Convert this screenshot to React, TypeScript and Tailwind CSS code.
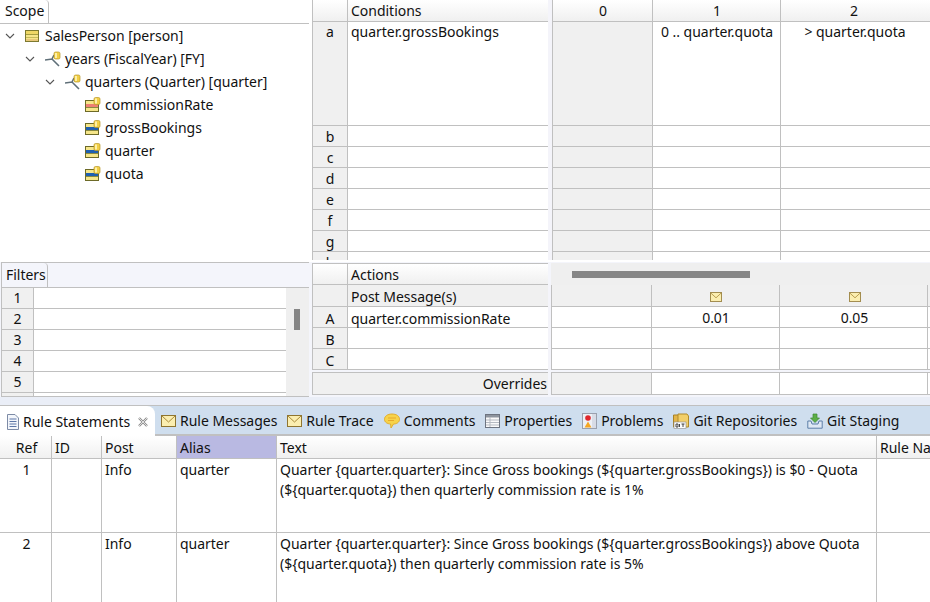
import React from "react";

const FONT = "font-['Noto_Sans','Open_Sans',sans-serif]";
const line = "border-[#c0c0c0]";

function Chevron() {
  return (
    <svg width="10" height="10" viewBox="0 0 10 10" className="shrink-0">
      <path d="M1 3 L5 7 L9 3" fill="none" stroke="#555" strokeWidth="1.1" />
    </svg>
  );
}

function Cyl({ x, y }: { x: number; y: number }) {
  return (
    <g>
      <rect x={x} y={y} width="6" height="7" rx="1.5" fill="#f2cf45" stroke="#b8962a" strokeWidth="0.7" />
      <rect x={x + 1} y={y + 1} width="2" height="5" fill="#fdf0a8" />
    </g>
  );
}

function TableIcon() {
  return (
    <svg width="15" height="14" viewBox="0 0 15 14" className="shrink-0">
      <rect x="0.5" y="1.5" width="13" height="11" fill="#f6e68a" stroke="#7d7a30" />
      <rect x="1" y="2" width="12" height="3" fill="#eed765" />
      <rect x="1" y="5" width="12" height="1" fill="#a49c40" />
      <rect x="1" y="8" width="12" height="1" fill="#c7bb5a" />
      <rect x="1" y="10" width="12" height="2" fill="#e8c87a" />
    </svg>
  );
}

function RelIcon() {
  return (
    <svg width="16" height="16" viewBox="0 0 16 16" className="shrink-0">
      <path d="M0 9 L7 8 L14 15 M7 8 L9 4" fill="none" stroke="#5f6f78" strokeWidth="1.6" />
      <Cyl x={9} y={1} />
    </svg>
  );
}

function AttrIcon({ band }: { band: string }) {
  return (
    <svg width="16" height="15" viewBox="0 0 16 15" className="shrink-0">
      <rect x="0.5" y="3.5" width="13" height="11" fill="#f6e68a" stroke="#6d6a28" />
      <rect x="1" y="7" width="12" height="3" fill={band} />
      <rect x="1" y="10" width="12" height="1" fill="#8a8a40" />
      <Cyl x={9} y={0.5} />
    </svg>
  );
}

function Envelope({ small }: { small?: boolean }) {
  const s = small ? 12 : 15;
  return (
    <svg width={s} height={small ? 10 : 12} viewBox="0 0 15 12" className="shrink-0">
      <rect x="0.5" y="0.5" width="14" height="11" fill="#fbeeb0" stroke="#8f7530" />
      <path d="M1 1 L7.5 7 L14 1" fill="none" stroke="#a98a3a" />
    </svg>
  );
}

function DocIcon() {
  return (
    <svg width="14" height="16" viewBox="0 0 14 16" className="shrink-0">
      <path d="M1.5 0.5 H9 L12.5 4 V15.5 H1.5 Z" fill="#f3f6fb" stroke="#7d8ba6" />
      <path d="M3.5 5 H10.5 M3.5 7.5 H10.5 M3.5 10 H10.5 M3.5 12.5 H10.5" stroke="#5d77a8" />
    </svg>
  );
}

function CloseX() {
  return (
    <svg width="10" height="10" viewBox="0 0 10 10" className="shrink-0">
      <path d="M1 1 L9 9 M9 1 L1 9" stroke="#8d8d8d" strokeWidth="2.4" />
      <path d="M1 1 L9 9 M9 1 L1 9" stroke="#f4f4f4" strokeWidth="0.8" />
    </svg>
  );
}

function CommentIcon() {
  return (
    <svg width="16" height="16" viewBox="0 0 16 16" className="shrink-0">
      <path d="M8 1 C12.5 1 15.5 3.2 15.5 6.3 C15.5 9.4 12.5 11 9.5 11 L7 15 L6.6 11 C3.2 10.8 0.5 9.2 0.5 6.3 C0.5 3.2 3.5 1 8 1 Z" fill="#f7d34a" stroke="#e2ad2c" />
      <path d="M4 5 H12 M4 7.5 H10" stroke="#e9a92a" />
    </svg>
  );
}

function PropsIcon() {
  return (
    <svg width="15" height="14" viewBox="0 0 15 14" className="shrink-0">
      <rect x="0.5" y="0.5" width="14" height="13" fill="#fafafa" stroke="#6d7480" />
      <rect x="1" y="1" width="13" height="2.5" fill="#8d949e" />
      <path d="M1 6 H14 M1 8.5 H14 M1 11 H14 M5 3 V13" stroke="#b5bac2" />
    </svg>
  );
}

function ProblemsIcon() {
  return (
    <svg width="15" height="16" viewBox="0 0 15 16" className="shrink-0">
      <rect x="0.5" y="0.5" width="14" height="15" fill="#eef0f5" stroke="#9aa0ad" />
      <rect x="10" y="1" width="4" height="14" fill="#d8dce6" />
      <circle cx="6" cy="5" r="2.8" fill="#e0262c" />
      <path d="M6 8.5 L9.5 14.5 H2.5 Z" fill="#f5a623" />
    </svg>
  );
}

function GitIcon() {
  return (
    <svg width="16" height="16" viewBox="0 0 16 16" className="shrink-0">
      <path d="M0.5 14 V2 H5 L6.5 3.5 H11.5 V14 Z" fill="#e3b54a" stroke="#a88226" />
      <path d="M5 1 H14 L15.5 3 V14 H5 Z" fill="#f2cf6a" stroke="#b08b2b" />
      <rect x="1" y="9" width="12" height="6.5" fill="#fbfbfb" stroke="#8a8a8a" strokeWidth="0.6" />
      <path d="M3 11 H5 V14 H3 Z M6.5 11 V14 M8.5 11 H11.5 M10 11 V14" fill="none" stroke="#333" strokeWidth="0.9" />
    </svg>
  );
}

function StagingIcon() {
  return (
    <svg width="16" height="16" viewBox="0 0 16 16" className="shrink-0">
      <path d="M0.8 8 H4 L5 11 H11 L12 8 H15.2 V15.2 H0.8 Z" fill="#dfe8f4" stroke="#5d7fa8" />
      <path d="M6 1 H10 V5 H12.5 L8 9.5 L3.5 5 H6 Z" fill="#5cae46" stroke="#3d8a30" strokeWidth="0.7" />
    </svg>
  );
}

function TreeRow({ depth, chevron, icon, label }: { depth: string; chevron?: boolean; icon: React.ReactNode; label: string }) {
  return (
    <div className={`flex items-center h-[23px] ${depth}`}>
      <div className="w-[20px] shrink-0">{chevron && <Chevron />}</div>
      <div className="w-[20px] shrink-0 flex">{icon}</div>
      <span className="whitespace-nowrap">{label}</span>
    </div>
  );
}

function Letter({ children, className = "" }: { children?: React.ReactNode; className?: string }) {
  return (
    <div className={`w-[36px] shrink-0 border-l border-r border-b ${line} bg-[#f0f0f0] flex justify-center ${className}`}>{children}</div>
  );
}

function CondRow({ letter, h, name, c1, c2, lower }: { letter?: string; h: string; name?: string; c1?: string; c2?: string; lower?: boolean }) {
  return (
    <div className={`flex ${h} shrink-0`}>
      <Letter className={lower ? "pt-[1px]" : ""}>{letter}</Letter>
      <div className={`w-[200px] shrink-0 border-b ${line} bg-white pl-[3px] whitespace-nowrap`}>{name}</div>
      <div className="w-[4px] shrink-0 bg-[#f4f4fa]" />
      <div className={`w-[101px] shrink-0 border-l border-r border-b ${line} bg-[#f0f0f0]`} />
      <div className={`w-[128px] shrink-0 border-r border-b ${line} bg-white pl-[1px] text-center whitespace-nowrap`}>{c1}</div>
      <div className={`w-[150px] shrink-0 border-b ${line} bg-white pr-[2px] text-center whitespace-nowrap`}>{c2}</div>
    </div>
  );
}

function HeadCell({ w, children, extra = "" }: { w: string; children?: React.ReactNode; extra?: string }) {
  return (
    <div className={`${w} shrink-0 border-r border-b ${line} bg-gradient-to-b from-white to-[#f0f0f0] whitespace-nowrap ${extra}`}>{children}</div>
  );
}

function ActRow({ letter, name, c1, c2, icon, white = true, h = "h-[21px]" }: { letter?: string; name?: string; c1?: string; c2?: string; icon?: boolean; white?: boolean; h?: string }) {
  const bg = white ? "bg-white" : "bg-[#f0f0f0]";
  return (
    <div className={`flex ${h} shrink-0`}>
      <Letter className="pt-[2px]">{letter}</Letter>
      <div className={`w-[200px] shrink-0 border-b ${line} ${bg} pl-[3px] pt-[2px] whitespace-nowrap`}>{name}</div>
      <div className="w-[3px] shrink-0 bg-[#f4f4fa]" />
      <div className={`w-[101px] shrink-0 border-l border-r border-b ${line} ${bg}`} />
      <div className={`w-[128px] shrink-0 border-r border-b ${line} ${bg} pt-[2px] pl-[1px] flex items-center justify-center`}>
        {icon ? <Envelope small /> : c1}
      </div>
      <div className={`w-[148px] shrink-0 border-r border-b ${line} ${bg} pt-[2px] pl-[2px] flex items-center justify-center`}>
        {icon ? <Envelope small /> : c2}
      </div>
      <div className={`w-[3px] shrink-0 border-b ${line} ${bg}`} />
    </div>
  );
}

function BottomTab({ icon, label }: { icon: React.ReactNode; label: string }) {
  return (
    <div className="flex items-center gap-[4px] whitespace-nowrap">
      {icon}
      <span>{label}</span>
    </div>
  );
}

function RuleRow({ n, h, lines }: { n: string; h: string; lines: string[] }) {
  const cell = `border-r border-b ${line} shrink-0 pt-[1px]`;
  return (
    <div className={`flex ${h} shrink-0`}>
      <div className={`${cell} w-[52px] text-center pl-[2px]`}>{n}</div>
      <div className={`${cell} w-[50px]`} />
      <div className={`${cell} w-[75px] pl-[3px]`}>Info</div>
      <div className={`${cell} w-[100px] pl-[3px]`}>quarter</div>
      <div className={`${cell} w-[600px] pl-[3px]`}>
        {lines.map((l) => (
          <div key={l} className="whitespace-nowrap">{l}</div>
        ))}
      </div>
      <div className={`${cell} w-[53px] border-r-0`} />
    </div>
  );
}

export default function App() {
  return (
    <div className={`${FONT} w-[930px] h-[602px] overflow-hidden bg-white text-[14px] leading-[20px] text-[#111] tracking-[-0.02px] flex flex-col`}>
      {/* upper editor */}
      <div className="flex h-[262px] shrink-0">
        <div className="w-[312px] shrink-0 flex flex-col">
          <div className={`h-[24px] shrink-0 flex border-b ${line} pl-[1px] w-[309px]`}>
            <div className={`w-[48px] border-r ${line} rounded-tr-[4px] pl-[4px] pt-[1px]`}>Scope</div>
          </div>
          <div>
            <TreeRow depth="pl-[5px]" chevron icon={<TableIcon />} label="SalesPerson [person]" />
            <TreeRow depth="pl-[25px]" chevron icon={<RelIcon />} label="years (FiscalYear) [FY]" />
            <TreeRow depth="pl-[45px]" chevron icon={<RelIcon />} label="quarters (Quarter) [quarter]" />
            <TreeRow depth="pl-[65px]" icon={<AttrIcon band="#ee7f72" />} label="commissionRate" />
            <TreeRow depth="pl-[65px]" icon={<AttrIcon band="#1f5fb0" />} label="grossBookings" />
            <TreeRow depth="pl-[65px]" icon={<AttrIcon band="#1f5fb0" />} label="quarter" />
            <TreeRow depth="pl-[65px]" icon={<AttrIcon band="#1f5fb0" />} label="quota" />
          </div>
        </div>
        <div className="flex-1 min-w-0 flex flex-col h-[260px] overflow-hidden">
          <div className="flex h-[22px] shrink-0">
            <Letter className="bg-gradient-to-b from-white to-[#f0f0f0]" />
            <HeadCell w="w-[200px]" extra="pl-[3px] pt-[1px] border-r-0">Conditions</HeadCell>
            <div className="w-[4px] shrink-0 bg-[#f4f4fa]" />
            <HeadCell w="w-[101px]" extra="border-l text-center pt-[1px] pl-[1px]">0</HeadCell>
            <HeadCell w="w-[128px]" extra="text-center pt-[1px] pl-[1px]">1</HeadCell>
            <HeadCell w="w-[150px]" extra="text-center pt-[1px] pr-[4px] border-r-0">2</HeadCell>
          </div>
          <CondRow letter="a" h="h-[104px]" name="quarter.grossBookings" c1="0 .. quarter.quota" c2="> quarter.quota" />
          {["b", "c", "d", "e", "f", "g", "h"].map((l) => (
            <CondRow key={l} letter={l} lower h="h-[21px]" />
          ))}
        </div>
      </div>

      {/* middle */}
      <div className="flex h-[135px] shrink-0 bg-[#f4f5fb]">
        <div className="w-[308px] shrink-0 flex flex-col ml-[1px] mr-[3px]">
          <div className={`h-[26px] shrink-0 flex border-t border-b ${line}`}>
            <div className={`w-[47px] bg-[#f4f5fb] border-l border-r ${line} rounded-tr-[4px] pl-[4px] pt-[2px]`}>Filters</div>
          </div>
          <div className={`flex-1 min-h-0 flex overflow-hidden border-b border-l ${line}`}>
            <div className="w-[284px] shrink-0 flex flex-col">
              {["1", "2", "3", "4", "5", ""].map((n) => (
                <div key={n} className="flex h-[21px] shrink-0">
                  <div className={`w-[32px] shrink-0 border-r border-b ${line} bg-[#f0f0f0] text-center`}>{n}</div>
                  <div className={`flex-1 border-b ${line} bg-white`} />
                </div>
              ))}
            </div>
            <div className="flex-1 bg-[#efefef] pt-[21px] pl-[8px]">
              <div className="w-[6px] h-[21px] bg-[#868686]" />
            </div>
          </div>
        </div>
        <div className="flex-1 min-w-0 flex flex-col pt-[1px]">
          <div className="flex h-[22px] shrink-0">
            <Letter className="border-t bg-gradient-to-b from-white to-[#f0f0f0]" />
            <div className={`w-[200px] shrink-0 border-t border-b ${line} bg-gradient-to-b from-white to-[#f0f0f0] pl-[3px] pt-[1px]`}>Actions</div>
            <div className="w-[3px] shrink-0" />
            <div className="flex-1 bg-[#efefef] pl-[21px] pt-[8px]">
              <div className="w-[178px] h-[7px] bg-[#868686]" />
            </div>
          </div>
          <ActRow name="Post Message(s)" icon white={false} h="h-[22px]" />
          <ActRow letter="A" name="quarter.commissionRate" c1="0.01" c2="0.05" />
          <ActRow letter="B" />
          <ActRow letter="C" />
          <div className="h-[2px] shrink-0" />
          <div className="flex h-[23px] shrink-0">
            <div className={`w-[236px] shrink-0 border-l border-b border-t ${line} bg-[#f0f0f0] text-right pr-[1px] pt-[1px]`}>Overrides</div>
            <div className="w-[3px] shrink-0" />
            <div className={`w-[101px] shrink-0 border-l border-r border-b border-t ${line} bg-[#f0f0f0]`} />
            <div className={`w-[128px] shrink-0 border-r border-b border-t ${line} bg-white`} />
            <div className={`w-[148px] shrink-0 border-r border-b border-t ${line} bg-white`} />
            <div className={`w-[3px] shrink-0 border-b border-t ${line} bg-white`} />
          </div>
        </div>
      </div>

      <div className="h-[8px] shrink-0 bg-[#eaeef7]" />

      {/* bottom tabs */}
      <div className={`h-[31px] shrink-0 flex bg-[#cfdeee] border-t ${line} border-b-2`}>
        <div className="w-[155px] shrink-0 h-[30px] bg-white rounded-tr-[8px] flex items-center pl-[6px] pt-[1px] gap-[3px] relative">
          <DocIcon />
          <span className="whitespace-nowrap">Rule Statements</span>
          <span className="ml-[5px]"><CloseX /></span>
        </div>
        <div className="flex-1 min-w-0 flex items-center gap-[10px] pl-[6px] pt-[1px]">
          <BottomTab icon={<Envelope />} label="Rule Messages" />
          <BottomTab icon={<Envelope />} label="Rule Trace" />
          <BottomTab icon={<CommentIcon />} label="Comments" />
          <BottomTab icon={<PropsIcon />} label="Properties" />
          <BottomTab icon={<ProblemsIcon />} label="Problems" />
          <BottomTab icon={<GitIcon />} label="Git Repositories" />
          <BottomTab icon={<StagingIcon />} label="Git Staging" />
        </div>
      </div>

      {/* bottom table */}
      <div className="flex-1 min-h-0 overflow-hidden flex flex-col">
        <div className="flex h-[23px] shrink-0">
          <HeadCell w="w-[52px]" extra="text-center pt-[2px] pl-[2px]">Ref</HeadCell>
          <HeadCell w="w-[50px]" extra="pl-[3px] pt-[2px]">ID</HeadCell>
          <HeadCell w="w-[75px]" extra="pl-[3px] pt-[2px]">Post</HeadCell>
          <div className={`w-[100px] shrink-0 border-r border-b ${line} bg-[#b9b9e2] pl-[3px] pt-[2px]`}>Alias</div>
          <HeadCell w="w-[600px]" extra="pl-[3px] pt-[2px]">Text</HeadCell>
          <HeadCell w="w-[53px]" extra="pl-[3px] pt-[2px] border-r-0 overflow-hidden">Rule Name</HeadCell>
        </div>
        <RuleRow
          n="1"
          h="h-[74px]"
          lines={[
            "Quarter {quarter.quarter}: Since Gross bookings (${quarter.grossBookings}) is $0 - Quota",
            "(${quarter.quota}) then quarterly commission rate is 1%",
          ]}
        />
        <RuleRow
          n="2"
          h="h-[74px]"
          lines={[
            "Quarter {quarter.quarter}: Since Gross bookings (${quarter.grossBookings}) above Quota",
            "(${quarter.quota}) then quarterly commission rate is 5%",
          ]}
        />
      </div>
    </div>
  );
}
